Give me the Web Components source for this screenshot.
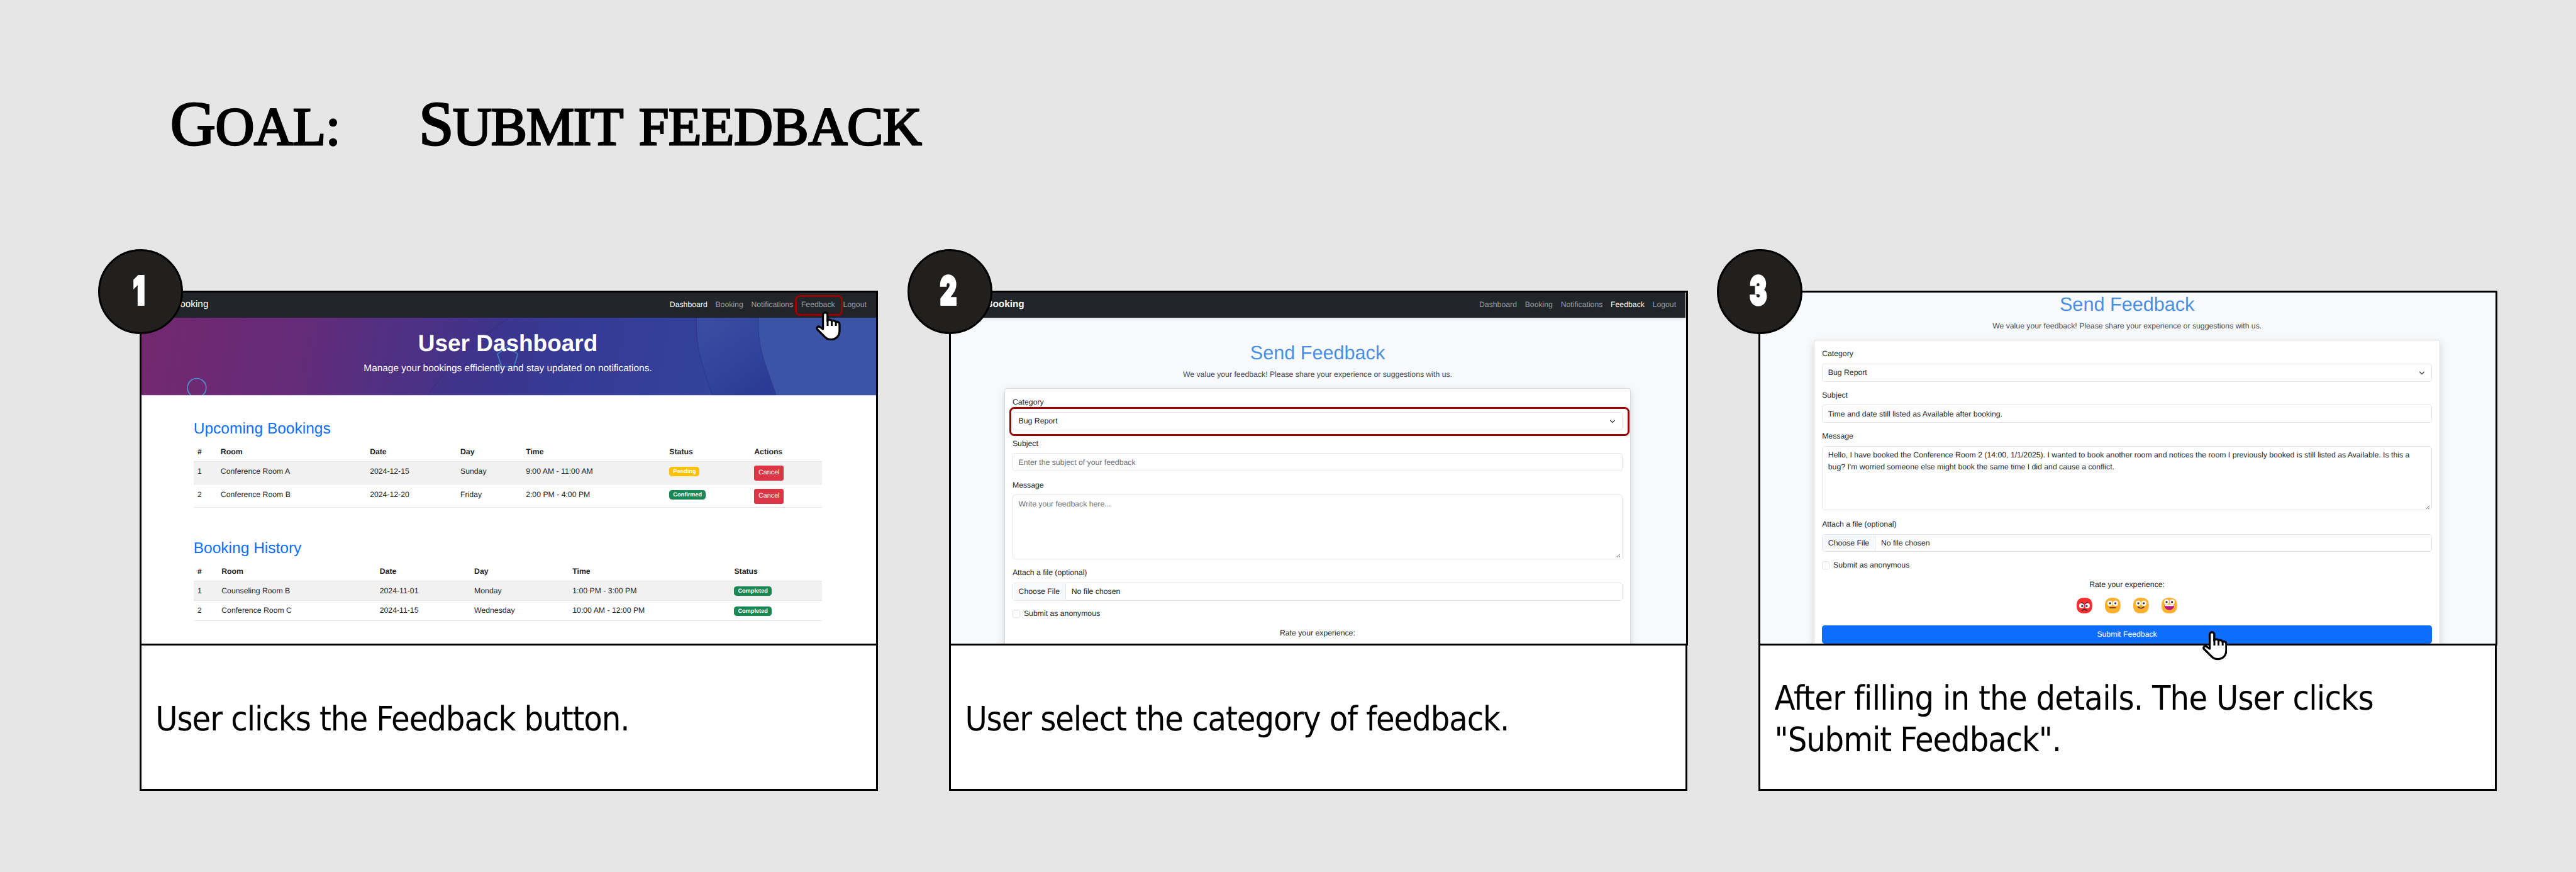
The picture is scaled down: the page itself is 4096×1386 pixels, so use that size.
<!DOCTYPE html>
<html lang="en">
<head>
<meta charset="utf-8">
<title>Submit feedback</title>
<style>
  html, body { margin: 0; background: #e6e6e6; overflow: hidden; }
  body { font-family: "Liberation Sans", Arial, sans-serif; text-rendering: geometricPrecision; }
</style>
</head>
<body>
<story-board></story-board>
<script>
const define = (name, html, setup) => customElements.define(name, class extends HTMLElement {
  connectedCallback() {
    if (this.shadowRoot) return;
    const t = document.createElement('template');
    t.innerHTML = html;
    this.attachShadow({ mode: 'open' }).appendChild(t.content.cloneNode(true));
    if (setup) setup.call(this, this.shadowRoot);
  }
});

/* Spreads a single line of text over the width given in its attribute */
define('fit-text', `<style>
  :host{display:block;white-space:nowrap;flex:none}
  span{display:inline-block}
</style><span><slot></slot></span>`, function (root) {
  const w = +this.getAttribute('width');
  this.style.width = w + 'px';
  const host = this.getBoundingClientRect().width;
  const text = root.querySelector('span').getBoundingClientRect().width;
  const n = this.textContent.length;
  this.style.letterSpacing = ((host - text) / n) * (w / host) + 'px';
});

define('hand-cursor', `<style>:host{display:block;width:48px;height:56px}svg{display:block}</style>
<svg width="48" height="56" viewBox="0 0 48 56" fill="none" stroke="#000" stroke-width="4" stroke-linejoin="round">
  <path fill="#fff" d="M14 34V6.5a4.3 4.3 0 0 1 8.8 0V18.5c1.2-3.6 6.800-3.200 8.200 0c2-1.800 6.800-.8 8 2.200c3-1.800 7 .4 7 4.300V37c0 10-6.500 17-16.500 17c-5 0-8-1.200-11-4.200L3 34.500C.8 31.500 4.500 27.600 8 30Z"/>
  <path stroke-width="3.600" d="M23 16V28M31 18V28M39 20V28"/>
</svg>`);

define('highlight-box', `<style>:host{display:block;box-sizing:border-box;border:4px solid #990000;border-radius:9px}</style>`);

define('nav-bar', `<style>
  :host{display:flex;align-items:center;justify-content:space-between;height:49px;box-sizing:border-box;
    padding:0 18.500px 4px 62px;background:#212529;color:#9b9d9f;font-size:14.850px;position:relative}
  .brand{font-size:18.560px;color:#fff;line-height:24px}
  :host([bold]) .brand{font-weight:700;padding-left:5px}
  nav{display:flex;gap:15.400px}
  .on{color:#fff}
</style>
<div class="brand">Booking</div>
<nav><span>Dashboard</span><span>Booking</span><span>Notifications</span><span>Feedback</span><span>Logout</span></nav>`,
function (root) {
  root.querySelectorAll('nav span').forEach(s => { if (s.textContent === this.getAttribute('active')) s.className = 'on'; });
});

define('hero-banner', `<style>
  :host{display:grid;height:149px;border-bottom:1px solid #d9d3ea;overflow:hidden;color:#fff;text-align:center}
  svg,.copy{grid-area:1/1}
  svg{display:block}
  .copy{padding:23px 4px 0 0;z-index:1}
  h1{margin:0;font-size:44.800px;line-height:53px;font-weight:700}
  p{margin:7.500px 0 0;font-size:18.700px;line-height:28px}
</style>
<svg width="1416" height="149" viewBox="0 0 1416 149" fill="none">
  <defs>
    <linearGradient id="bg" gradientUnits="userSpaceOnUse" x1="0" y1="60" x2="1300" y2="290">
      <stop offset="0" stop-color="#73286f"/><stop offset=".22" stop-color="#652b78"/><stop offset=".36" stop-color="#503083"/>
      <stop offset=".5" stop-color="#3f338a"/><stop offset=".62" stop-color="#373a93"/><stop offset=".85" stop-color="#35439c"/><stop offset="1" stop-color="#35449e"/>
    </linearGradient>
    <linearGradient id="b1" x1="0" y1="0" x2=".7" y2="1"><stop offset="0" stop-color="#3a4ea2"/><stop offset=".5" stop-color="#33469e"/><stop offset="1" stop-color="#2b3b95"/></linearGradient>
  </defs>
  <rect width="1416" height="149" fill="url(#bg)"/>
  <path d="M709 0C650 38 590 90 553 149H1100Q1068 70 1070 0Z" fill="#2d43a8" opacity=".12"/>
  <path d="M709 0C650 38 590 90 553 149" stroke="#332d78"/>
  <path d="M1069.500 0C1067 60 1082 95 1100 149H1224L1190 0Z" fill="url(#b1)"/>
  <path d="M1069.500 0C1067 60 1082 95 1100 149" stroke="#2c3a8c" stroke-width="1.500"/>
  <path d="M1189 0C1186 60 1203 90 1223 149H1416V0Z" fill="#3b54a6"/>
  <path d="M1189 0C1186 60 1203 90 1223 149" stroke="#2c3f90" stroke-width="1.500"/>
  <circle cx="106.500" cy="135" r="18" stroke="#4a94cf" stroke-width="2"/>
  <path d="M705 55L725 70L718 94.500H694L686 70Z" stroke="#3a83c6" stroke-width="2"/>
</svg>
<div class="copy"><h1>User Dashboard</h1><p>Manage your bookings efficiently and stay updated on notifications.</p></div>`);

define('status-badge', `<style>
  :host{display:inline-block;box-sizing:border-box;height:18.500px;padding:0 7.200px;border-radius:5.500px;background:#198754;color:#fff;
    font-size:11.140px;font-weight:700;line-height:18.500px;vertical-align:top;margin-top:2.500px}
  :host([pending]){background:#ffc107}
</style><slot></slot>`);

define('cancel-button', `<style>
  :host{display:inline-block;box-sizing:border-box;height:29px;padding:0 8.300px;border-radius:4px;background:#dc3545;color:#fff;
    font-size:13px;line-height:28px;vertical-align:top}
</style><slot></slot>`);

define('booking-table', `<style>
  :host{display:block;color:#212529;font-size:14.850px;line-height:22.300px}
  h2{margin:0 0 7.200px;font-size:29.700px;line-height:35.600px;font-weight:400;color:#0d6efd}
  .row{display:grid;grid-template-columns:var(--cols);box-sizing:border-box;height:var(--row);padding-left:7.400px;border-bottom:1px solid #e4e6e9}
  .row>*{padding-top:7.600px}
  .head{height:38px;font-weight:700}
  .odd{background:#f1f1f1}
</style><h2></h2><div class="t"></div>`, function (root) {
  const up = this.hasAttribute('upcoming');
  root.querySelector('h2').textContent = up ? 'Upcoming Bookings' : 'Booking History';
  this.style.setProperty('--cols', up ? '44.800px 287.600px 174.400px 126.200px 276.600px 163.500px 1fr' : '46.500px 304.800px 182.200px 189.300px 311.700px 1fr');
  this.style.setProperty('--row', up ? '44.500px' : '38.300px');
  const rows = up ? [
    ['#','Room','Date','Day','Time','Status','Actions'],
    ['1','Conference Room A','2024-12-15','Sunday','9:00 AM - 11:00 AM','<status-badge pending>Pending</status-badge>','<cancel-button>Cancel</cancel-button>'],
    ['2','Conference Room B','2024-12-20','Friday','2:00 PM - 4:00 PM','<status-badge>Confirmed</status-badge>','<cancel-button>Cancel</cancel-button>']
  ] : [
    ['#','Room','Date','Day','Time','Status'],
    ['1','Counseling Room B','2024-11-01','Monday','1:00 PM - 3:00 PM','<status-badge>Completed</status-badge>'],
    ['2','Conference Room C','2024-11-15','Wednesday','10:00 AM - 12:00 PM','<status-badge>Completed</status-badge>']
  ];
  root.querySelector('.t').innerHTML = rows.map((r, i) =>
    `<div class="row ${i ? (i % 2 ? 'odd' : '') : 'head'}">${r.map(c => `<div>${c}</div>`).join('')}</div>`).join('');
});

define('dashboard-page', `<style>
  :host{display:block;height:676px;background:#fff}
  main{display:flex;flex-direction:column;gap:60.500px;padding:45.500px 104px 0 100.400px}
</style>
<nav-bar active="Dashboard"></nav-bar>
<hero-banner></hero-banner>
<main><booking-table upcoming></booking-table><booking-table></booking-table></main>`);

define('form-field', `<style>
  :host{display:block;margin-bottom:14.850px}
  label{display:block;line-height:22.300px;margin-bottom:7.400px}
  .box{display:flex;justify-content:space-between;box-sizing:border-box;height:35px;border:1px solid #e3e6e9;border-radius:5.500px;
    padding:5.500px 10.500px;line-height:22.300px;background:#fff;overflow:hidden}
  :host([area]) .box{height:124.300px}
  :host([area]){margin-bottom:15.300px}
  :host([hint]) .box{color:#6a7178}
  .grip{align-self:flex-end;margin:0 -7.500px -4px 0}
  .chev{margin:7px 2px 0 0}
  :host([file]) .box{justify-content:flex-start;padding:0}
  .btn{background:#f8f9fa;border-right:1px solid #e3e6e9;padding:5.500px 10.500px 0;margin-right:11px}
  .none{padding-top:5.500px}
</style><label></label><div class="box"><slot></slot></div>`, function (root) {
  root.querySelector('label').textContent = this.getAttribute('label');
  const box = root.querySelector('.box');
  if (this.hasAttribute('select')) box.insertAdjacentHTML('beforeend', '<svg class="chev" width="12" height="12" viewBox="0 0 12 12" fill="none" stroke="#343a40" stroke-width="1.600" stroke-linecap="round" stroke-linejoin="round"><path d="M2 2.800L6 6.800L10 2.800"/></svg>');
  if (this.hasAttribute('area')) box.insertAdjacentHTML('beforeend', '<svg class="grip" width="8" height="8" viewBox="0 0 8 8" stroke="#555" stroke-width="1.100"><path d="M.5 7.500L7.500 .8M4.500 7.500L7.500 4.700"/></svg>');
  if (this.hasAttribute('file')) box.innerHTML = '<div class="btn">Choose File</div><div class="none">No file chosen</div>';
});

define('mood-face', `<style>:host{display:block;width:30px;height:30px}svg{display:block}</style><svg width="30" height="30" viewBox="0 0 30 30"></svg>`,
function (root) {
  const eyes = (y, g, r) => `<circle cx="${15 - g}" cy="${y}" r="${r}" fill="#fff"/><circle cx="${15 + g}" cy="${y}" r="${r}" fill="#fff"/>`;
  const pup = (y, g) => `<circle cx="${15 - g}" cy="${y}" r="2" fill="#402a32"/><circle cx="${15 + g}" cy="${y}" r="2" fill="#402a32"/>`;
  const body = c => `<path d="M15 0C25.500 0 30 5 30 15S25.500 30 15 30S0 25.500 0 15S4.500 0 15 0Z" fill="${c}"/>`;
  const line = (d, w = 2) => `<path d="${d}" fill="none" stroke="#402a32" stroke-width="${w}" stroke-linecap="round" stroke-linejoin="round"/>`;
  const faces = {
    angry: body('#f92f2f') + eyes(15.500, 5.400, 4.900) + '<path d="M9 6L15 12.300L21 6Z" fill="#f92f2f"/>' + pup(16, 4.200) + line('M8.800 8.600L13.600 12.200M21.200 8.600L16.400 12.200', 1.500) + line('M10.500 24.800Q15 20 19.500 24.800'),
    flat: body('#ffb02e') + eyes(10.800, 5.400, 4.900) + pup(10.800, 5.200) + line('M9.500 19.300H20.500', 1.900),
    smile: body('#ffb02e') + eyes(10.800, 5.400, 4.900) + pup(10.800, 5.200) + line('M9.500 18Q15 22.200 20.500 18', 1.900),
    grin: body('#ffb02e') + eyes(8.200, 5.400, 4.900) + pup(8.400, 5.200) + '<path d="M5.500 13.500H24.500C25 19.500 20.500 23.700 15 23.700S5 19.500 5.500 13.500Z" fill="#bb1d80"/><path d="M6 13.400H24L23.300 16H6.700Z" fill="#fff"/>'
  };
  root.querySelector('svg').innerHTML = faces[this.getAttribute('mood')];
});

define('feedback-page', `<style>
  :host{display:flex;flex-direction:column;height:676px;overflow:hidden;background:#f8f9fb;color:#212529;font-size:14.850px;position:relative}
  nav-bar{margin-right:1px;flex:none;box-shadow:0 3px 6px rgba(0,0,0,.12)}
  :host([filled]) nav-bar{display:none}
  .intro{flex:none;text-align:center;padding:45.200px 4px 0 0}
  :host([filled]) .intro{padding-top:.7px}
  h1{margin:0;font-size:37.100px;line-height:44.500px;font-weight:400;color:#4a90e2}
  p{margin:7.800px 0 0;line-height:22.300px;color:#454a50}
  .card{flex:none;box-sizing:border-box;width:1207.500px;height:900px;margin:15.400px 0 0 102.500px;padding:14.850px 14.850px 0;
    border:1px solid #d8dbde;border-radius:5.500px;background:#fff;box-shadow:0 7px 15px rgba(0,0,0,.15)}
  .check{display:flex;gap:7.300px;line-height:22.300px;margin:-.5px 0 14.850px}
  .check i{box-sizing:border-box;width:14.500px;height:14.850px;margin-top:3.700px;border:1px solid #dfe2e6;border-radius:3.700px}
  .rate{text-align:center;line-height:22.300px}
  .faces{display:flex;justify-content:center;gap:24.600px;margin-top:14.500px}
  .submit{height:35.300px;margin-top:22.500px;border-radius:5.500px;background:#0d6efd;color:#fff;text-align:center;line-height:35px}
  .mark{position:absolute;left:112px;top:220px;width:1195px;height:56px}
</style>
<nav-bar bold active="Feedback"></nav-bar>
<div class="intro"><h1>Send Feedback</h1><p>We value your feedback! Please share your experience or suggestions with us.</p></div>
<div class="card">
  <form-field label="Category" select>Bug Report</form-field>
  <form-field class="s" label="Subject"></form-field>
  <form-field class="m" label="Message" area></form-field>
  <form-field label="Attach a file (optional)" file></form-field>
  <div class="check"><i></i>Submit as anonymous</div>
  <div class="rate">Rate your experience:</div>
</div>`, function (root) {
  const s = root.querySelector('.s'), m = root.querySelector('.m');
  if (this.hasAttribute('filled')) {
    s.textContent = 'Time and date still listed as Available after booking.';
    m.innerHTML = '<div>Hello, I have booked the Conference Room 2 (14:00, 1/1/2025). I wanted to book another room and notices the room I previously booked is still listed as Available. Is this a<br>bug? I\'m worried someone else might book the same time I did and cause a conflict.</div>';
    root.querySelector('.card').insertAdjacentHTML('beforeend',
      '<div class="faces">' + ['angry','flat','smile','grin'].map(x => `<mood-face mood="${x}"></mood-face>`).join('') + '</div><div class="submit">Submit Feedback</div>');
  } else {
    s.textContent = 'Enter the subject of your feedback';
    m.textContent = 'Write your feedback here...';
    s.setAttribute('hint', ''); m.setAttribute('hint', '');
    root.appendChild(document.createElement('highlight-box')).className = 'mark';
  }
});

define('step-card', `<style>
  :host{display:block;position:relative;width:1423px;height:964px;flex:none}
  .shot{box-sizing:border-box;height:684px;border:4px solid #000;overflow:hidden}
  :host([wide]) .shot{width:1424px}
  .cap{box-sizing:border-box;height:280px;border:4px solid #000;border-top:0;background:#fff;padding:7px 0 0 27px;
    display:flex;flex-direction:column;justify-content:center;
    font:65px/80.300px "DejaVu Sans Condensed","DejaVu Sans",sans-serif;font-stretch:condensed;color:#000}
  .num{position:absolute;left:-80px;top:-80px;box-sizing:border-box;width:164px;height:164px;border:4px solid #000;border-radius:50%;
    background:#21201e;color:#fff;display:flex;align-items:center;justify-content:center}
  .num b{font:900 75px/80px Inter,"Liberation Sans",sans-serif;transform:scaleX(.66);-webkit-text-stroke:5px #fff;margin:-5px 6px 0 0}
</style>
<div class="shot"><slot></slot></div>
<div class="cap"><slot name="caption"></slot></div>
<div class="num"><b></b></div>
<slot name="over"></slot>`, function (root) { root.querySelector('b').textContent = this.getAttribute('step'); });

define('goal-title', `<style>
  :host{display:flex;align-items:baseline;box-sizing:border-box;height:560px;padding:168px 0 0 328px;color:#000;text-transform:uppercase;
    font:104px/140px "Liberation Serif","Times New Roman",serif;-webkit-text-stroke:3.500px #000}
  .cap{font-size:121px}
  .a{margin-right:151px}.b{margin-right:31px}
</style>
<fit-text class="a" width="328"><span class="cap">G</span>oal:</fit-text>
<fit-text class="b" width="393"><span class="cap">S</span>ubmit</fit-text>
<fit-text width="545">feedback</fit-text>`);

define('story-board', `<style>
  :host{display:block;width:4964px;height:1679px;zoom:.825136;overflow:hidden;background:#e6e6e6}
  .row{display:flex;gap:137px;padding-left:269px}
  .red{position:absolute;left:1263px;top:8px;width:92px;height:40px}
  .c1{position:absolute;left:1303px;top:40px}
  .c3{position:absolute;left:855px;top:656px}
</style>
<goal-title></goal-title>
<div class="row">
  <step-card step="1"><dashboard-page></dashboard-page>
    <fit-text slot="caption" width="913">User clicks the Feedback button.</fit-text>
    <highlight-box slot="over" class="red"></highlight-box><hand-cursor slot="over" class="c1"></hand-cursor></step-card>
  <step-card step="2" wide><feedback-page></feedback-page>
    <fit-text slot="caption" width="1048">User select the category of feedback.</fit-text></step-card>
  <step-card step="3" wide><feedback-page filled></feedback-page>
    <fit-text slot="caption" width="1154">After filling in the details. The User clicks</fit-text>
    <fit-text slot="caption" width="552">"Submit Feedback".</fit-text>
    <hand-cursor slot="over" class="c3"></hand-cursor></step-card>
</div>`);
</script>
</body>
</html>
